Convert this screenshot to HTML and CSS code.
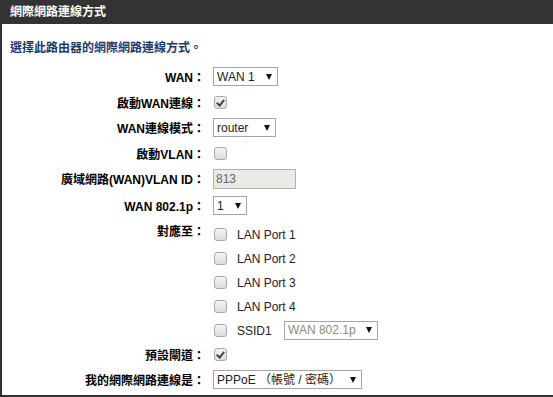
FILE: index.html
```html
<!DOCTYPE html>
<html lang="zh-Hant">
<head>
    <meta charset="UTF-8">
    <title>網際網路連線方式</title>
    <link rel="stylesheet" href="styles.css">
</head>
<body>
    <div class="panel">
        <div class="panel-head">網際網路連線方式</div>
        <p class="intro">選擇此路由器的網際網路連線方式。</p>

        <div class="form">
            <div class="label row-tall">WAN：</div>
            <div class="field row-tall">
                <span class="sel"><select class="w-wan"><option>WAN 1</option></select></span>
            </div>

            <div class="label row">啟動WAN連線：</div>
            <div class="field row"><span class="check on"></span></div>

            <div class="label row-tall">WAN連線模式：</div>
            <div class="field row-tall">
                <span class="sel"><select class="w-mode"><option>router</option></select></span>
            </div>

            <div class="label row">啟動VLAN：</div>
            <div class="field row"><span class="check"></span></div>

            <div class="label row-tall">廣域網路(WAN)VLAN ID：</div>
            <div class="field row-tall"><input class="text-in" type="text" value="813" disabled></div>

            <div class="label row-tall">WAN 802.1p：</div>
            <div class="field row-tall">
                <span class="sel"><select class="w-prio"><option>1</option></select></span>
            </div>

            <div class="label label-top">對應至：</div>
            <div class="ports">
                <div class="port"><span class="check"></span><span class="port-name">LAN Port 1</span></div>
                <div class="port"><span class="check"></span><span class="port-name">LAN Port 2</span></div>
                <div class="port"><span class="check"></span><span class="port-name">LAN Port 3</span></div>
                <div class="port"><span class="check"></span><span class="port-name">LAN Port 4</span></div>
                <div class="port">
                    <span class="check"></span><span class="port-name ssid">SSID1</span>
                    <span class="sel"><select class="w-ssid" disabled><option>WAN 802.1p</option></select></span>
                </div>
            </div>

            <div class="label row">預設閘道：</div>
            <div class="field row"><span class="check on"></span></div>

            <div class="label row-tall">我的網際網路連線是：</div>
            <div class="field row-tall">
                <span class="sel"><select class="w-conn"><option>PPPoE （帳號 / 密碼）</option></select></span>
            </div>
        </div>
    </div>
</body>
</html>
```

FILE: styles.css
```css
body {
    margin: 0;
    background: #fff;
    font-family: 'Liberation Sans', Arial, 'Noto Sans CJK TC', sans-serif;
}
.panel {
    border-left: 2px solid #333;
    border-bottom: 2px solid #333;
    height: 397px;
    box-sizing: border-box;
}
.panel-head {
    background: #333;
    color: #fff;
    font-weight: bold;
    font-size: 12px;
    height: 24px;
    line-height: 25px;
    margin-left: -2px;
    padding-left: 10px;
}
.intro {
    margin: 16px 0 0 8px;
    color: #1e3a6c;
    font-size: 12px;
    font-weight: bold;
    line-height: 16px;
}
.form {
    display: grid;
    grid-template-columns: 203px 1fr;
    column-gap: 8px;
    margin-top: 7px;
}
.label {
    display: flex;
    align-items: center;
    justify-content: flex-end;
    font-size: 12px;
    font-weight: bold;
    color: #000;
    white-space: nowrap;
}
.label-top {
    align-items: flex-start;
    padding-top: 3px;
}
.field {
    display: flex;
    align-items: center;
}
.row {
    height: 24px;
}
.row-tall {
    height: 27px;
}
.ports {
    padding-top: 3px;
}
.port {
    display: flex;
    align-items: center;
    height: 24px;
}
.port-name {
    font-size: 12px;
    color: #222;
    margin-left: 10px;
    padding-top: 2px;
}
.port-name.ssid {
    width: 47px;
}
.check {
    display: inline-block;
    position: relative;
    width: 11px;
    height: 11px;
    margin-left: 1px;
    border: 1px solid #a9a9a9;
    border-radius: 3px;
    background: linear-gradient(#f4f4f4, #dcdcdc);
}
.check.on::after {
    content: "";
    position: absolute;
    left: 3px;
    top: 1px;
    width: 3px;
    height: 6px;
    border: solid #444;
    border-width: 0 2px 2px 0;
    transform: rotate(40deg);
}
.sel {
    display: inline-block;
    position: relative;
}
.sel::after {
    content: "";
    position: absolute;
    right: 6px;
    top: 7px;
    border-left: 3.5px solid transparent;
    border-right: 3.5px solid transparent;
    border-top: 6px solid #111;
}
.sel select {
    -webkit-appearance: none;
    appearance: none;
    height: 19px;
    border: 1px solid #a5a5a5;
    border-radius: 0;
    background: #fff;
    font-family: 'Liberation Sans', Arial, 'Noto Sans CJK TC', sans-serif;
    font-size: 12px;
    color: #222;
    padding: 0 0 0 3px;
    margin: 0;
}
.sel select:disabled {
    color: #8a8a8a;
    opacity: 1;
}
.w-wan { width: 65px; }
.w-mode { width: 63px; }
.w-prio { width: 34px; }
.w-ssid { width: 94px; }
.w-conn { width: 149px; }
.text-in {
    width: 83px;
    height: 20px;
    box-sizing: border-box;
    border: 1px solid #b0b0b0;
    background: #ebeae4;
    color: #666;
    font-family: 'Liberation Sans', Arial, sans-serif;
    font-size: 12px;
    padding: 0 2px;
    margin: 0;
}
```
